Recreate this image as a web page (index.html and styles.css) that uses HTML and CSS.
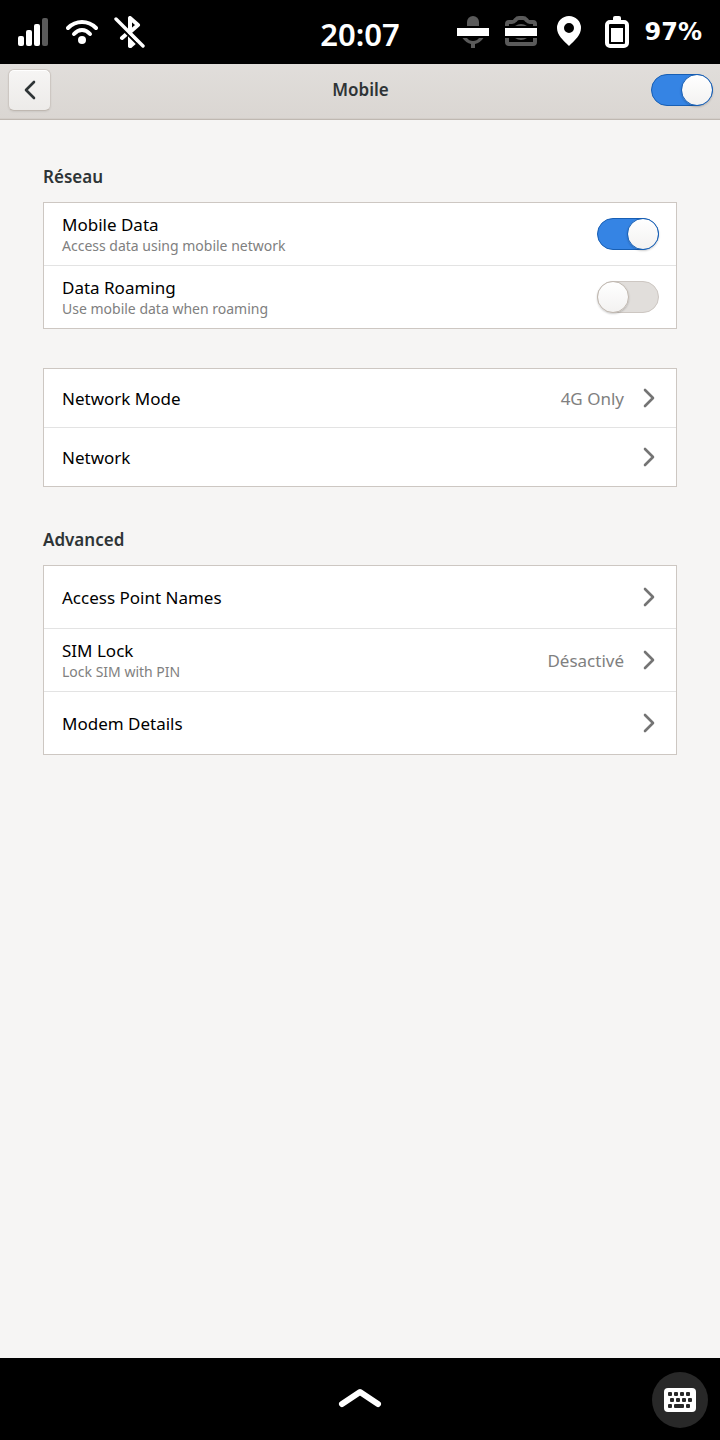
FILE: index.html
```html
<!DOCTYPE html>
<html lang="fr">
<head>
<meta charset="utf-8">
<meta name="viewport" content="width=device-width, initial-scale=1">
<title>Mobile</title>
<link rel="stylesheet" href="styles.css">
</head>
<body class="phone">
<svg class="defs" aria-hidden="true">
  <symbol id="chevron" viewBox="0 0 12 20"><path d="M2 2 10 10 2 18" fill="none" stroke="currentColor" stroke-width="2.6" stroke-linecap="round" stroke-linejoin="round"/></symbol>
</svg>
<div class="status-bar">
  <div class="status-group">
    <svg class="icon" viewBox="0 0 32 32" role="img" aria-label="Signal"><g fill="#fff"><rect y="20" width="6" height="10" rx="2"/><rect x="8" y="14" width="6" height="16" rx="2"/><rect x="16" y="8" width="6" height="22" rx="2"/></g><rect x="24" y="2" width="6" height="28" rx="2" fill="#5a5a5a"/></svg>
    <svg class="icon" viewBox="0 0 32 32" role="img" aria-label="Wi-Fi"><g fill="none" stroke="#fff" stroke-width="4" stroke-linecap="round"><path d="M2 12Q8 6 16 6T30 12"/><path d="M8 18Q11.500 14 16 14T24 18"/></g><circle cx="16" cy="24" r="4" fill="#fff"/></svg>
    <svg class="icon" viewBox="0 0 32 32" role="img" aria-label="Bluetooth off"><path d="M16 2V30M16 2 24 9 16 16M12 18.500 8 22" fill="none" stroke="#fff" stroke-width="4" stroke-linecap="round" stroke-linejoin="round"/><path d="M14 17V30Q15 32.500 17.500 31.800L23 27V24Z" fill="#fff"/><path d="M8 12.800 28 32.800" stroke="#000" stroke-width="2.2"/><path d="M2 3 29 30" stroke="#fff" stroke-width="3.4" stroke-linecap="round"/></svg>
  </div>
  <time class="clock">20:07</time>
  <div class="status-group status-group-end">
    <svg class="icon" viewBox="0 0 32 32" role="img" aria-label="Microphone off"><g fill="#5a5a5a"><path d="M10 10V6a6 6 0 0 1 12 0v4Z"/><path d="M5.500 22H10Q12 25 16 25T22 22H26.500Q23 27 18 28V32H14V28Q9 27 5.500 22Z"/></g><path fill="#fff" d="M0 12h32v8H0z"/></svg>
    <svg class="icon" viewBox="0 0 32 32" role="img" aria-label="Camera off"><g fill="none" stroke="#5a5a5a" stroke-width="4"><path d="M2 10V8Q2 6 4 6H7Q9 6 10 4.500L11 3.500Q12 2 14 2H18Q20 2 21 3.500L22 4.500Q23 6 25 6H28Q30 6 30 8V10"/><path d="M2 22V26Q2 28 4 28H28Q30 28 30 26V22"/></g><g fill="#5a5a5a"><path d="M10 10Q16 6 22 10ZM10 22Q16 26 22 22Z"/></g><path fill="#fff" d="M0 12h32v8H0z"/></svg>
    <svg class="icon" viewBox="0 0 32 32" role="img" aria-label="Location"><path fill="#fff" fill-rule="evenodd" d="M16 0A12 12 0 0 1 28 12C28 19 22 24 16 30 10 24 4 19 4 12A12 12 0 0 1 16 0ZM16 7a5 5 0 1 0 0 10A5 5 0 0 0 16 7Z"/></svg>
    <span class="battery"><svg class="icon" viewBox="0 0 32 32" role="img" aria-label="Battery"><path d="M12 4V2Q12 0 14 0H18Q20 0 20 2V4Z" fill="#fff"/><rect x="6" y="6" width="20" height="24" rx="3" fill="none" stroke="#fff" stroke-width="4"/><path d="M10 12h12v14H10z" fill="#fff"/></svg>97%</span>
  </div>
</div>
<header class="header-bar">
  <button class="back" type="button" aria-label="Back"><svg class="back-icon" viewBox="0 0 12 20"><path d="M10 2 2 10 10 18" fill="none" stroke="currentColor" stroke-width="2.6" stroke-linecap="round" stroke-linejoin="round"/></svg></button>
  <h1 class="title">Mobile</h1>
  <input class="switch" type="checkbox" role="switch" aria-label="Mobile" checked>
</header>
<main class="content">
  <section class="group">
    <h2 class="group-title">Réseau</h2>
    <div class="card">
      <label class="row"><span class="text"><span class="name">Mobile Data</span><span class="hint">Access data using mobile network</span></span><input class="switch" type="checkbox" role="switch" checked></label>
      <label class="row"><span class="text"><span class="name">Data Roaming</span><span class="hint">Use mobile data when roaming</span></span><input class="switch" type="checkbox" role="switch"></label>
    </div>
  </section>
  <section class="group">
    <div class="card card-compact">
      <button class="row" type="button"><span class="text"><span class="name">Network Mode</span></span><span class="value">4G Only</span><svg class="chevron"><use href="#chevron"/></svg></button>
      <button class="row" type="button"><span class="text"><span class="name">Network</span></span><svg class="chevron"><use href="#chevron"/></svg></button>
    </div>
  </section>
  <section class="group">
    <h2 class="group-title">Advanced</h2>
    <div class="card">
      <button class="row" type="button"><span class="text"><span class="name">Access Point Names</span></span><svg class="chevron"><use href="#chevron"/></svg></button>
      <button class="row" type="button"><span class="text"><span class="name">SIM Lock</span><span class="hint">Lock SIM with PIN</span></span><span class="value">Désactivé</span><svg class="chevron"><use href="#chevron"/></svg></button>
      <button class="row" type="button"><span class="text"><span class="name">Modem Details</span></span><svg class="chevron"><use href="#chevron"/></svg></button>
    </div>
  </section>
</main>
<nav class="home-bar">
  <button class="home" type="button" aria-label="Home"><svg class="home-icon" viewBox="0 0 44 26"><path d="M4 17 22 5 40 17" fill="none" stroke="#fff" stroke-width="6" stroke-linecap="round" stroke-linejoin="round"/></svg></button>
  <button class="keyboard" type="button" aria-label="Keyboard"><svg class="icon" viewBox="0 0 32 32"><rect y="4" width="32" height="24" rx="4" fill="#fff"/><g fill="#282828"><rect x="4" y="8" width="4" height="4" rx="1"/><rect x="10" y="8" width="4" height="4" rx="1"/><rect x="16" y="8" width="4" height="4" rx="1"/><rect x="22" y="8" width="4" height="4" rx="1"/><rect x="6" y="14" width="4" height="4" rx="1"/><rect x="12" y="14" width="4" height="4" rx="1"/><rect x="18" y="14" width="4" height="4" rx="1"/><rect x="24" y="14" width="4" height="4" rx="1"/><rect x="4" y="20" width="4" height="4" rx="1"/><rect x="10" y="20" width="10" height="4" rx="1"/><rect x="22" y="20" width="4" height="4" rx="1"/></g></svg></button>
</nav>
</body>
</html>
```
FILE: styles.css
```css
*, *::before { box-sizing: border-box; }
.phone {
  margin: 0;
  min-height: 100vh;
  display: flex;
  flex-direction: column;
  background: #f6f5f4;
  color: #000;
  font-family: "Noto Sans", sans-serif;
  font-size: 17px;
}
button { font: inherit; color: inherit; margin: 0; padding: 0; border: 0; background: none; }
.defs { display: none; }
.status-bar {
  height: 64px;
  padding: 0 18px;
  display: grid;
  grid-template-columns: 1fr auto 1fr;
  align-items: center;
  background: #000;
  color: #fff;
}
.status-group { display: flex; align-items: center; gap: 16px; }
.status-group-end { justify-content: flex-end; }
.icon { display: block; width: 32px; height: 32px; flex: none; }
.clock { font-size: 31px; font-weight: 600; line-height: 40px; padding-top: 4px; }
.battery { display: flex; align-items: center; gap: 12px; font-family: "DejaVu Sans", sans-serif; font-size: 24px; font-weight: 700; line-height: 32px; }
.header-bar {
  height: 56px;
  padding: 0 7px 3px 8px;
  display: grid;
  grid-template-columns: 1fr auto 1fr;
  align-items: center;
  background: linear-gradient(#e1dedb, #dad6d2);
  border-bottom: 1px solid #bfb8b1;
  box-shadow: inset 0 -1px #d3cec9;
}
.header-bar .switch { justify-self: end; }
.title { margin: 0; font-size: 17px; line-height: 24px; font-weight: 600; color: #2e3436; }
.back {
  width: 43px;
  height: 42px;
  display: grid;
  place-items: center;
  border: 1px solid #cdc7c2;
  border-bottom-color: #bfb8b1;
  border-radius: 6px;
  background: linear-gradient(#f6f5f4, #edebe9);
  box-shadow: inset 0 1px #fff, 0 1px 2px rgba(0, 0, 0, .07);
  color: #2e3436;
}
.back-icon { width: 12px; height: 20px; }
.content { flex: 1; padding: 43px; display: flex; flex-direction: column; gap: 39px; }
.group-title { margin: 0 0 11px; font-size: 17px; line-height: 28px; font-weight: 600; color: #2e3436; }
.card { border: 1px solid #cdc7c2; background: #fff; }
.row {
  width: 100%;
  height: 62px;
  padding: 0 17px 0 18px;
  display: flex;
  align-items: center;
  text-align: left;
}
button.row { padding-right: 21px; }
.row + .row { border-top: 1px solid #e3e3e3; height: 63px; }
.card-compact .row { height: 58px; }
.card-compact .row + .row { height: 59px; }
.text { flex: 1; display: flex; flex-direction: column; padding-top: 2px; }
.name { line-height: 22px; }
.hint { font-size: 14px; line-height: 20px; color: #808080; }
.value { color: #808080; margin-right: 19px; }
.chevron { width: 12px; height: 20px; color: #747474; }
.switch {
  appearance: none;
  width: 62px;
  height: 32px;
  margin: 0;
  flex: none;
  display: flex;
  border: 1px solid #cdc7c2;
  border-radius: 16px;
  background: #e1dedb;
}
.switch::before {
  content: "";
  width: 32px;
  height: 32px;
  margin: -1px;
  border: 1px solid #c0b8b0;
  border-radius: 50%;
  background: linear-gradient(#fff, #f3f2f1);
  box-shadow: 0 1px 2px rgba(0, 0, 0, .2);
}
.switch:checked { justify-content: flex-end; background: #3584e4; border-color: #185fb4; }
.switch:checked::before { border-color: #185fb4; }
.home-bar {
  height: 82px;
  padding: 2px 12px 0;
  display: grid;
  grid-template-columns: 1fr auto 1fr;
  align-items: center;
  background: #000;
}
.home { grid-column: 2; }
.home-icon { display: block; width: 44px; height: 26px; }
.keyboard {
  width: 56px;
  height: 56px;
  justify-self: end;
  display: grid;
  place-items: center;
  border-radius: 50%;
  background: #282828;
}
```
